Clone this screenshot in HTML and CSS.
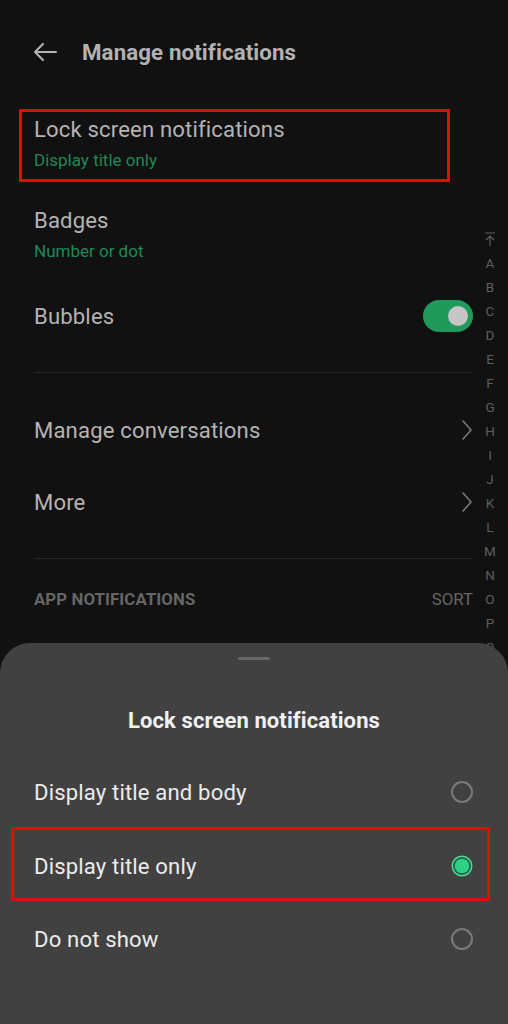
FILE: index.html
```html
<!DOCTYPE html>
<html>
<head>
<meta charset="utf-8">
<link rel="stylesheet" href="styles.css">
</head>
<body>
<div class="screen">
  <header class="header">
    <svg class="back" width="24" height="18" viewBox="0 0 24 18"><path d="M23 9H2M10 1L2 9l8 8" fill="none" stroke="#b4b4b4" stroke-width="2" stroke-linecap="round" stroke-linejoin="round"/></svg>
    <h1 class="title">Manage notifications</h1>
  </header>

  <div class="item boxed">
    <div class="item-title">Lock screen notifications</div>
    <div class="item-sub">Display title only</div>
  </div>

  <div class="item badges">
    <div class="item-title">Badges</div>
    <div class="item-sub">Number or dot</div>
  </div>

  <div class="row bubbles">
    <div class="item-title">Bubbles</div>
    <div class="switch"><div class="knob"></div></div>
  </div>

  <div class="divider d1"></div>

  <div class="row nav">
    <div class="item-title">Manage conversations</div>
    <svg class="chev" width="10" height="20" viewBox="0 0 10 20"><path d="M1 1l8 9-8 9" fill="none" stroke="#787878" stroke-width="1.6" stroke-linecap="round" stroke-linejoin="round"/></svg>
  </div>
  <div class="row nav">
    <div class="item-title">More</div>
    <svg class="chev" width="10" height="20" viewBox="0 0 10 20"><path d="M1 1l8 9-8 9" fill="none" stroke="#787878" stroke-width="1.6" stroke-linecap="round" stroke-linejoin="round"/></svg>
  </div>

  <div class="divider d2"></div>

  <div class="section">
    <span class="section-title">APP NOTIFICATIONS</span>
    <span class="sort">SORT</span>
  </div>

  <div class="index">
    <div class="idx"><svg width="12" height="14" viewBox="0 0 12 14"><path d="M1 1h10M6 4v10M2 8l4-4 4 4" fill="none" stroke="#5e5e5e" stroke-width="1.2"/></svg></div>
    <div class="idx">A</div><div class="idx">B</div><div class="idx">C</div><div class="idx">D</div>
    <div class="idx">E</div><div class="idx">F</div><div class="idx">G</div><div class="idx">H</div>
    <div class="idx">I</div><div class="idx">J</div><div class="idx">K</div><div class="idx">L</div>
    <div class="idx">M</div><div class="idx">N</div><div class="idx">O</div><div class="idx">P</div>
    <div class="idx">Q</div>
  </div>

  <div class="sheet">
    <div class="handle"></div>
    <div class="sheet-title">Lock screen notifications</div>
    <div class="options">
      <div class="option o1">
        <span>Display title and body</span>
        <span class="radio"></span>
      </div>
      <div class="option o2">
        <span>Display title only</span>
        <svg class="radio-on" width="22" height="22" viewBox="0 0 22 22">
          <circle cx="11" cy="11" r="10.5" fill="#4fd69a"/>
          <circle cx="11" cy="11" r="9" fill="#1e5f40"/>
          <circle cx="11" cy="11" r="7.3" fill="#30cf86"/>
        </svg>
      </div>
      <div class="option o3">
        <span>Do not show</span>
        <span class="radio"></span>
      </div>
    </div>
  </div>
</div>
</body>
</html>
```

FILE: styles.css
```css
* { box-sizing: border-box; margin: 0; padding: 0; }
html, body { background: #111111; }
body { font-family: Roboto, "Noto Sans", "Liberation Sans", sans-serif; }

.screen {
  position: relative;
  width: 508px;
  height: 1024px;
  overflow: hidden;
  background: #111111;
}

.header {
  height: 104px;
  display: flex;
  align-items: center;
  padding-left: 33px;
  margin-bottom: 5px;
}
.back { display: block; margin-right: 25px; }
.title {
  font-size: 22.3px;
  font-weight: 700;
  color: #b2b2b2;
  letter-spacing: 0.1px;
}

.item-title {
  font-size: 22.1px;
  line-height: 26px;
  color: #b4b4b4;
  letter-spacing: 0.15px;
}
.item-sub {
  font-size: 17px;
  line-height: 24px;
  color: #1f8a55;
  margin-top: 6px;
}

.boxed {
  margin-left: 19px;
  width: 431px;
  height: 73px;
  border: 3px solid #e10c0c;
  padding: 4px 0 0 12px;
}
.badges {
  padding-left: 34px;
  margin-top: 25px;
}

.row {
  display: flex;
  align-items: center;
  justify-content: space-between;
  padding-left: 34px;
  padding-right: 35px;
}
.bubbles { height: 32px; margin-top: 37px; }

.switch {
  width: 50px;
  height: 32px;
  border-radius: 16px;
  background: #1f9a5a;
  display: flex;
  align-items: center;
  justify-content: flex-end;
  padding-right: 5px;
}
.knob {
  width: 20px;
  height: 20px;
  border-radius: 50%;
  background: #c6c6c6;
}

.divider {
  height: 1px;
  background: #262626;
  margin-left: 34px;
  margin-right: 35px;
}
.d1 { margin-top: 40px; margin-bottom: 21px; }
.d2 { margin-top: 20px; }

.nav { height: 72px; }
.chev { display: block; margin-right: 1px; }

.section {
  display: flex;
  justify-content: space-between;
  padding-left: 34px;
  padding-right: 35px;
  margin-top: 30px;
  line-height: 20px;
  font-size: 16.8px;
}
.section-title { font-weight: 700; color: #666666; letter-spacing: 0.1px; }
.sort { color: #666666; }

.index {
  position: absolute;
  left: 478px;
  top: 227px;
  width: 24px;
  display: flex;
  flex-direction: column;
}
.idx {
  height: 24px;
  line-height: 24px;
  text-align: center;
  font-size: 13.5px;
  color: #5e5e5e;
  display: flex;
  align-items: center;
  justify-content: center;
}

.sheet {
  position: absolute;
  left: 0;
  top: 643px;
  width: 508px;
  height: 381px;
  background: #414141;
  border-radius: 30px 30px 0 0;
  display: flex;
  flex-direction: column;
  align-items: stretch;
}
.handle {
  align-self: center;
  width: 32px;
  height: 3px;
  border-radius: 2px;
  background: #686868;
  margin-top: 14px;
}
.sheet-title {
  margin-top: 49px;
  text-align: center;
  font-size: 22px;
  line-height: 24px;
  font-weight: 700;
  color: #f0f0f0;
  letter-spacing: 0.1px;
}
.options { margin-top: 24px; display: flex; flex-direction: column; }
.option {
  display: flex;
  align-items: center;
  justify-content: space-between;
  font-size: 22.1px;
  color: #ececec;
  letter-spacing: 0.15px;
  padding-left: 34px;
  padding-right: 35px;
}
.o1 { height: 70px; }
.o2 {
  height: 74px;
  margin-left: 11px;
  margin-right: 18px;
  border: 3px solid #e10c0c;
  padding-left: 20px;
  padding-right: 14px;
  padding-top: 4px;
}
.o3 { height: 76px; }

.radio {
  width: 22px;
  height: 22px;
  border-radius: 50%;
  border: 2px solid #7a7a7a;
}
.radio-on { display: block; }
```
